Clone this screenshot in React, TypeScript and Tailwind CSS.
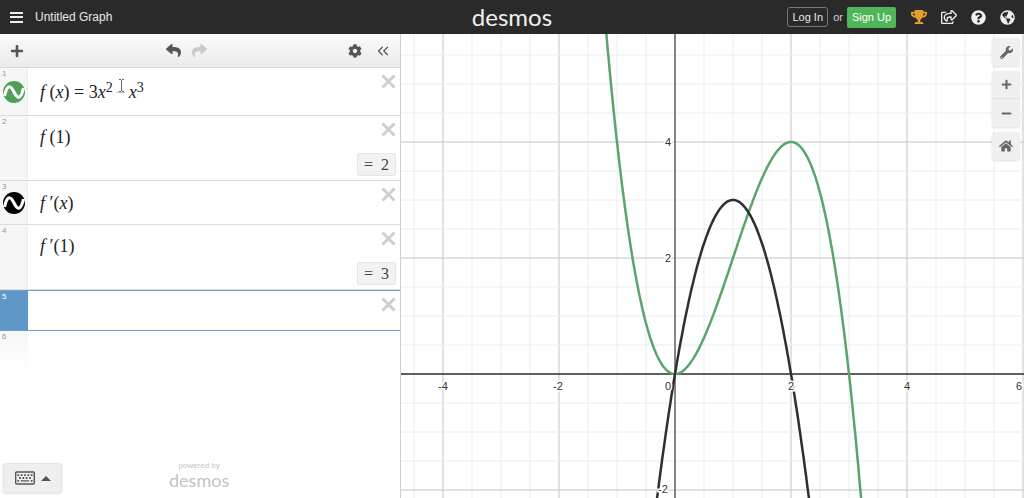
import type { ReactNode } from 'react';
import { ChevronsLeft } from 'lucide-react';
import {
  FaCog,
  FaGlobeAmericas,
  FaHome,
  FaMinus,
  FaPlus,
  FaQuestionCircle,
  FaRegKeyboard,
  FaRegShareSquare,
  FaReply,
  FaShare,
  FaTrophy,
  FaWrench,
} from 'react-icons/fa';

const UNIT = 58;
const ORIGIN_X = 274;
const ORIGIN_Y = 340;
const GRAPH_W = 623;
const GRAPH_H = 464;

const curve = (fn: (x: number) => number) => {
  const pts: string[] = [];
  for (let x = -1.6; x <= 3.8; x += 0.02) {
    pts.push(`${(ORIGIN_X + x * UNIT).toFixed(1)},${(ORIGIN_Y - fn(x) * UNIT).toFixed(1)}`);
  }
  return pts.join(' ');
};

function WaveIcon({ color }: { color: string }) {
  return (
    <svg width="22" height="22" viewBox="0 0 22 22">
      <circle cx="11" cy="11" r="11" fill={color} />
      <path d="M1.5 15 C4 4 7 3 11 11 C15 19 18 18 20.5 7" fill="none" stroke="#fff" strokeWidth="3.2" />
    </svg>
  );
}

function CloseX() {
  return (
    <svg className="absolute right-[4px] top-[6px]" width="15" height="15" viewBox="0 0 15 15">
      <path d="M1.5 1.5 L13.5 13.5 M13.5 1.5 L1.5 13.5" stroke="#cfcfcf" strokeWidth="3" />
    </svg>
  );
}

function Row(props: {
  n: number;
  h: string;
  pt: string;
  icon?: ReactNode;
  result?: string;
  children?: ReactNode;
}) {
  return (
    <div className={`relative flex border-b border-[#dedede] ${props.h}`}>
      <div className="relative w-[28px] shrink-0 bg-[#f6f6f6] border-r border-[#ececec] flex items-center justify-center">
        <span className="absolute left-[2px] top-[1px] text-[8px] leading-[10px] text-[#999]">{props.n}</span>
        {props.icon}
      </div>
      <div className={`flex-1 flex flex-col pl-[12px] pr-[4px] ${props.pt}`}>
        <div className="h-[24px] leading-[24px] text-[18px] text-[#222] whitespace-nowrap font-['Liberation_Serif',serif]">
          {props.children}
        </div>
        {props.result && (
          <div className="mt-auto mb-[4px] self-end w-[39px] h-[23px] flex items-center justify-center gap-[8px] rounded-[2px] bg-[#f2f2f2] border border-[#e6e6e6] text-[16px] text-[#444] font-['Liberation_Serif',serif]">
            <span>=</span>
            <span>{props.result}</span>
          </div>
        )}
      </div>
      <CloseX />
    </div>
  );
}

function Header() {
  return (
    <header className="h-[34px] shrink-0 bg-[#2a2a2a] grid grid-cols-3 items-center text-[#e8e8e8] text-[12px]">
      <div className="flex items-center pl-[10px]">
        <div className="w-[13px] flex flex-col gap-[2.5px]">
          <div className="h-[2px] bg-[#eee]" />
          <div className="h-[2px] bg-[#eee]" />
          <div className="h-[2px] bg-[#eee]" />
        </div>
        <span className="ml-[12px]">Untitled Graph</span>
      </div>
      <div className="flex justify-center">
        <span className="font-['Lato',sans-serif] text-[24px] leading-[30px] text-[#f0f0f0]">desmos</span>
      </div>
      <div className="flex items-center justify-end pr-[9px] text-[11px]">
        <div className="w-[41px] h-[20px] flex items-center justify-center rounded-[3px] border border-[#777]">Log In</div>
        <span className="ml-[5px] mr-[4px] text-[#ccc]">or</span>
        <div className="w-[49px] h-[21px] flex items-center justify-center rounded-[2px] bg-[#4fb75a] text-white">Sign Up</div>
        <FaTrophy className="ml-[15px] text-[#e0a030]" size={16} />
        <FaRegShareSquare className="ml-[14px] text-[#ededed]" size={16} />
        <FaQuestionCircle className="ml-[14px] text-[#f2f2f2]" size={15} />
        <FaGlobeAmericas className="ml-[14px] text-[#ededed]" size={15} />
      </div>
    </header>
  );
}

function Toolbar() {
  return (
    <div className="h-[34px] shrink-0 flex items-center bg-gradient-to-b from-[#fbfbfb] to-[#ebebeb] border-b border-[#d8d8d8]">
      <FaPlus className="ml-[10px] text-[#555]" size={14} />
      <FaReply className="ml-[142px] text-[#555]" size={15} />
      <FaShare className="ml-[11px] text-[#c9c9c9]" size={15} />
      <FaCog className="ml-[141px] text-[#555]" size={14} />
      <ChevronsLeft className="ml-[12px] text-[#555]" size={18} strokeWidth={1.6} />
    </div>
  );
}

function ExpressionList() {
  return (
    <aside className="w-[401px] shrink-0 flex flex-col bg-white border-r border-[#cfcfcf]">
      <Toolbar />
      <Row n={1} h="h-[48px]" pt="pt-[12px]" icon={<WaveIcon color="#4f9f58" />}>
        <i>f</i> (<i>x</i>) = 3<i>x</i>
        <sup className="text-[14px] top-[-6px]">2</sup>
        <span className="relative mx-[3px] text-[#bbb]">
          −
          <svg className="absolute left-[2px] top-[-3px]" width="7" height="13" viewBox="0 0 7 13">
            <path d="M1 .5 H3 M4 .5 H6 M3.5 1 V12 M1 12.5 H3 M4 12.5 H6" stroke="#666" strokeWidth="1" fill="none" />
          </svg>
        </span>
        <i>x</i>
        <sup className="text-[14px] top-[-6px]">3</sup>
      </Row>
      <Row n={2} h="h-[65px]" pt="pt-[9px]" result="2">
        <i>f</i> (1)
      </Row>
      <Row n={3} h="h-[44px]" pt="pt-[10px]" icon={<WaveIcon color="#000" />}>
        <i>f</i> ′(<i>x</i>)
      </Row>
      <Row n={4} h="h-[65px]" pt="pt-[9px]" result="3">
        <i>f</i> ′(1)
      </Row>
      <div className="relative flex h-[41px] border-y border-[#6f9fcb]">
        <div className="relative w-[28px] shrink-0 bg-[#5f97c8]">
          <span className="absolute left-[2px] top-[1px] text-[8px] leading-[10px] text-white">5</span>
        </div>
        <div className="flex-1" />
        <CloseX />
      </div>
      <div className="relative h-[40px] w-[28px] bg-gradient-to-b from-[#f6f6f6] to-white">
        <span className="absolute left-[2px] top-[1px] text-[8px] leading-[10px] text-[#999]">6</span>
      </div>
      <div className="mt-auto mb-[5px] ml-[3px] flex items-end">
        <div className="w-[59px] h-[30px] flex items-center justify-center gap-[6px] rounded-[3px] bg-[#efefef] border border-[#e6e6e6] shadow-sm text-[#555]">
          <FaRegKeyboard size={20} />
          <span className="w-0 h-0 border-x-[5px] border-x-transparent border-b-[5px] border-b-[#555]" />
        </div>
        <div className="ml-[107px] mb-[4px] flex flex-col items-center text-[#c4c4c4]">
          <span className="text-[8px] leading-[10px]">powered by</span>
          <span className="font-['Lato',sans-serif] text-[18px] leading-[18px]">desmos</span>
        </div>
      </div>
    </aside>
  );
}

function Plot() {
  const xs = Array.from({ length: 30 }, (_, i) => i - 10);
  const ys = Array.from({ length: 24 }, (_, i) => i - 12);
  const labelStyle = { paintOrder: 'stroke', stroke: '#fff', strokeWidth: 3 } as const;
  return (
    <svg width={GRAPH_W} height={GRAPH_H} className="block absolute inset-0 font-['Liberation_Sans',sans-serif]">
      {xs.map((i) => (
        <line
          key={`v${i}`}
          x1={ORIGIN_X + i * 29}
          x2={ORIGIN_X + i * 29}
          y1={0}
          y2={GRAPH_H}
          stroke={i % 4 === 0 ? '#c4c4c4' : '#ececec'}
        />
      ))}
      {ys.map((i) => (
        <line
          key={`h${i}`}
          x1={0}
          x2={GRAPH_W}
          y1={ORIGIN_Y + i * 29}
          y2={ORIGIN_Y + i * 29}
          stroke={i % 4 === 0 ? '#c4c4c4' : '#ececec'}
        />
      ))}
      <line x1={ORIGIN_X} x2={ORIGIN_X} y1={0} y2={GRAPH_H} stroke="#666" strokeWidth="1.5" />
      <line x1={0} x2={GRAPH_W} y1={ORIGIN_Y} y2={ORIGIN_Y} stroke="#333" strokeWidth="1.5" />
      <polyline points={curve((x) => 3 * x * x - x * x * x)} fill="none" stroke="#5aa56c" strokeWidth="2.5" />
      <polyline points={curve((x) => 6 * x - 3 * x * x)} fill="none" stroke="#2f2f2f" strokeWidth="2.5" />
      <g fontSize="11" fill="#333" textAnchor="middle" style={labelStyle}>
        <text x={42} y={356}>-4</text>
        <text x={157} y={356}>-2</text>
        <text x={267} y={356}>0</text>
        <text x={390} y={356}>2</text>
        <text x={506} y={356}>4</text>
        <text x={618} y={356}>6</text>
        <text x={267} y={112}>4</text>
        <text x={267} y={228}>2</text>
        <text x={262} y={459}>-2</text>
      </g>
    </svg>
  );
}

function GraphControls() {
  const btn = 'w-[28px] h-[28px] flex items-center justify-center bg-[#f0f0f0] text-[#666]';
  return (
    <div className="absolute right-[4px] top-[4px] flex flex-col gap-[5px]">
      <div className={`${btn} rounded-[3px] shadow`}>
        <FaWrench size={13} />
      </div>
      <div className="rounded-[3px] shadow">
        <div className={`${btn} rounded-t-[3px] border-b border-[#e2e2e2]`}>
          <FaPlus size={11} />
        </div>
        <div className={`${btn} rounded-b-[3px]`}>
          <FaMinus size={11} />
        </div>
      </div>
      <div className={`${btn} rounded-[3px] shadow`}>
        <FaHome size={14} />
      </div>
    </div>
  );
}

export default function App() {
  return (
    <div className="h-[498px] w-[1024px] flex flex-col overflow-hidden bg-white font-['Liberation_Sans',sans-serif]">
      <Header />
      <div className="flex-1 flex min-h-0">
        <ExpressionList />
        <main className="relative flex-1 overflow-hidden">
          <Plot />
          <GraphControls />
        </main>
      </div>
    </div>
  );
}
